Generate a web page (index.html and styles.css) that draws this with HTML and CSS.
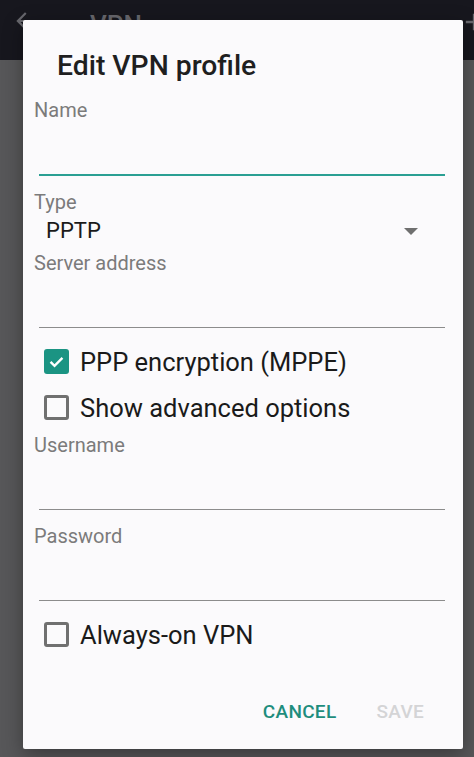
FILE: index.html
```html
<!DOCTYPE html>
<html lang="en">
<head>
  <meta charset="UTF-8">
  <title>Edit VPN profile</title>
  <link rel="stylesheet" href="styles.css">
</head>
<body>
<header class="appbar">
  <svg class="back" width="24" height="24" viewBox="0 0 24 24">
    <path d="M20 11H7.8l5.6-5.6L12 4l-8 8 8 8 1.4-1.4L7.8 13H20z" fill="currentColor"/>
  </svg>
  <span class="appbar-title">VPN</span>
  <svg class="add" width="24" height="24" viewBox="0 0 24 24">
    <path d="M19 13h-6v6h-2v-6H5v-2h6V5h2v6h6z" fill="currentColor"/>
  </svg>
</header>

<div class="dialog">
  <h1 class="dialog-title">Edit VPN profile</h1>

  <div class="field">
    <label class="label" for="name">Name</label>
    <div class="input focused" id="name"></div>
  </div>

  <div class="field">
    <span class="label">Type</span>
    <div class="select">
      <span>PPTP</span>
      <svg class="caret" width="14" height="7" viewBox="0 0 14 7"><path d="M0 0h14L7 7z" fill="currentColor"/></svg>
    </div>
  </div>

  <div class="field">
    <label class="label" for="server">Server address</label>
    <div class="input" id="server"></div>
  </div>

  <div class="checks">
    <div class="check-row">
      <span class="box checked">
        <svg width="19" height="19" viewBox="0 0 24 24"><path d="M4.5 12.5l5 5 10-10" fill="none" stroke="#fff" stroke-width="3"/></svg>
      </span>
      <span>PPP encryption (MPPE)</span>
    </div>
    <div class="check-row">
      <span class="box"></span>
      <span>Show advanced options</span>
    </div>
  </div>

  <div class="field">
    <label class="label" for="user">Username</label>
    <div class="input" id="user"></div>
  </div>

  <div class="field">
    <label class="label" for="pass">Password</label>
    <div class="input" id="pass"></div>
  </div>

  <div class="checks">
    <div class="check-row">
      <span class="box"></span>
      <span>Always-on VPN</span>
    </div>
  </div>

  <div class="actions">
    <button class="btn cancel" type="button">CANCEL</button>
    <button class="btn save" type="button" disabled>SAVE</button>
  </div>
</div>
</body>
</html>
```

FILE: styles.css
```css
body {
  margin: 0;
  height: 757px;
  overflow: hidden;
  background: #575759;
  font-family: Roboto, "Noto Sans", sans-serif;
  color: #212121;
}

.appbar {
  height: 60px;
  background: #17171e;
  color: #67676d;
  display: flex;
  align-items: flex-start;
  padding: 8px 0 0 12px;
  box-sizing: border-box;
}

.back {
  width: 26px;
  height: 26px;
}

.appbar-title {
  margin-left: 52px;
  margin-top: 2px;
  font-size: 26px;
  font-weight: 500;
  line-height: 30px;
}

.add {
  margin-left: auto;
  margin-right: -14px;
  width: 28px;
  height: 28px;
}

.dialog {
  position: absolute;
  left: 23px;
  top: 20px;
  width: 440px;
  height: 729px;
  box-sizing: border-box;
  background: #fbfafc;
  border-radius: 2px;
  box-shadow: 0 6px 20px rgba(0, 0, 0, 0.35);
  padding: 30px 18px 0 11px;
}

.dialog-title {
  margin: 0 0 16px 23px;
  font-size: 28.3px;
  line-height: 32px;
  font-weight: 500;
  color: #1f1f1f;
}

.field {
  margin-bottom: 14px;
}

.label {
  display: block;
  font-size: 20px;
  line-height: 24px;
  color: #7b7b7b;
}

.input {
  height: 52px;
  margin-left: 5px;
  border-bottom: 1px solid #8c8c8c;
}

.input.focused {
  height: 52px;
  border-bottom: 2px solid #2a9f93;
}

.select {
  display: flex;
  align-items: center;
  justify-content: space-between;
  margin: 4px 0 0 12px;
  padding-right: 27px;
  font-size: 22px;
  line-height: 26px;
  color: #1a1a1a;
}

.field:has(.select) {
  margin-bottom: 7px;
}

.caret {
  color: #6f6f6f;
}

.checks {
  margin: -4px 0 3px 10px;
}

.check-row {
  display: flex;
  align-items: center;
  height: 46px;
  font-size: 25.5px;
  color: #1a1a1a;
}

.check-row span:last-child {
  padding-top: 2px;
}

.box {
  width: 25px;
  height: 25px;
  box-sizing: border-box;
  border: 3px solid #707070;
  border-radius: 3px;
  margin-right: 11px;
  display: flex;
  align-items: center;
  justify-content: center;
}

.box.checked {
  border: none;
  background: #1b9483;
}

.actions {
  display: flex;
  justify-content: flex-end;
  gap: 40px;
  margin-top: 45px;
  padding-right: 21px;
}

.btn {
  border: none;
  background: none;
  padding: 0;
  font-family: inherit;
  font-size: 19px;
  line-height: 20px;
  font-weight: 500;
  letter-spacing: 0.3px;
}

.cancel {
  color: #1e8d7d;
}

.save {
  color: #d4d4d6;
}
```
